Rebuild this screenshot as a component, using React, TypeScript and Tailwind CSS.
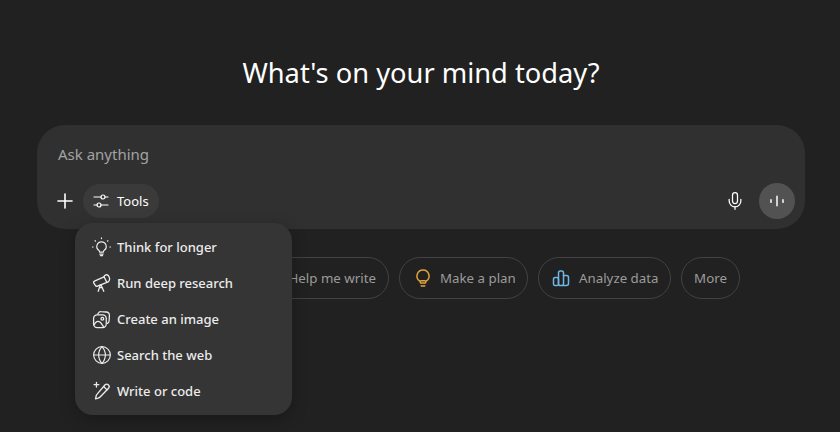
import type { ReactNode } from 'react';
import { Globe, Mic, Plus } from 'lucide-react';

const FONT = 'font-["Noto_Sans",sans-serif]';

function Telescope() {
    return (
        <svg width="20" height="20" viewBox="0 0 18 18" fill="none" stroke="currentColor" strokeWidth="1.2" strokeLinecap="round" strokeLinejoin="round">
            <path d="M2.200 7.400 10.800 3.400 13.400 8.400 5 11.800a1.600 1.600 0 0 1-2-.7L1.600 9.200a1.300 1.300 0 0 1 .6-1.800Z" />
            <path d="M10.800 3.400c.3-1.200 1.900-2.200 3.100-1.700 1.300.6 2.300 3.200 1.800 4.700-.4 1.200-1.300 1.900-2.300 2" />
            <path d="M7.500 10.700 5.600 16.400M8 10.500l2.600 5.900M6.800 13.200h2.600" />
        </svg>
    );
}

function ImageSpark() {
    return (
        <svg width="19" height="19" viewBox="0 0 18 18" fill="none" stroke="currentColor" strokeWidth="1.2" strokeLinecap="round" strokeLinejoin="round">
            <path d="M5.500 3.800 6 3c.5-1 1.400-1.500 2.400-1.400l5 .3c2 .1 3.200 1.300 3.100 3.300l-.3 5c-.1 1.100-.6 2-1.500 2.500" />
            <rect x="1.500" y="4.600" width="12" height="12" rx="3.400" />
            <circle cx="9.800" cy="8.300" r="1.300" />
            <path d="M2 14.200c1.500-3.200 3.600-4.200 5.500-2.800 1.400 1 2.400 3 3.700 4.900" />
        </svg>
    );
}

function PencilSpark() {
    return (
        <svg width="20" height="20" viewBox="0 0 18 18" fill="none" stroke="currentColor" strokeWidth="1.2" strokeLinecap="round" strokeLinejoin="round">
            <path d="M11.800 3.400a2.200 2.200 0 0 1 3.100 3.100L7.300 14.400c-.5.500-1.100.8-1.800 1l-2.300.6.500-2.400c.1-.7.400-1.300.9-1.800l7.200-8.400Z" />
            <path d="m10.500 5 3 3" />
            <path d="M4 1.200v4.200M1.900 3.300h4.200" />
        </svg>
    );
}

function BulbRays() {
    return (
        <svg width="22" height="22" viewBox="0 0 20 20" fill="none" stroke="currentColor" strokeWidth="1.150" strokeLinecap="round" strokeLinejoin="round">
            <path d="M10 5.200a4.400 4.400 0 0 0-2.600 8c.6.400.8 1 .8 1.600h3.600c0-.6.200-1.200.8-1.600a4.400 4.400 0 0 0-2.600-8Z" />
            <path d="M8.400 16.700h3.200M9 18.300h2" />
            <path d="M10 1.400v.6M3.900 4l.4.400M16.100 4l-.4.400M1.400 10H2M18 10h.6" />
        </svg>
    );
}

function PlanBulb() {
    return (
        <svg width="20" height="20" viewBox="0 0 20 20" fill="none" stroke="#e2a33d" strokeWidth="1.500" strokeLinecap="round" strokeLinejoin="round">
            <path d="M10 2a6 6 0 0 0-3.500 10.900c.7.500 1 1.200 1 2.100h5c0-.9.300-1.600 1-2.100A6 6 0 0 0 10 2Z" />
            <path d="M7.800 12.800h4.400M8.200 17.800c.5.300 3.100.3 3.600 0" />
        </svg>
    );
}

function BarsIcon() {
    return (
        <svg width="20" height="20" viewBox="0 0 20 20" fill="none" stroke="#6cb8e8" strokeWidth="1.500" strokeLinecap="round" strokeLinejoin="round">
            <rect x="2.500" y="9.500" width="5" height="8" rx="1.600" />
            <rect x="7.500" y="3" width="5" height="14.500" rx="1.800" />
            <path d="M12.500 7.500h3a2 2 0 0 1 2 2v6a2 2 0 0 1-2 2h-3" />
        </svg>
    );
}

function SlidersIcon() {
    return (
        <svg width="18" height="18" viewBox="0 0 18 18" fill="none" stroke="currentColor" strokeWidth="1.200" strokeLinecap="round">
            <path d="M2 5h7M13 5h3" />
            <circle cx="11" cy="5" r="2" />
            <path d="M2 13h3M9 13h7" />
            <circle cx="7" cy="13" r="2" />
        </svg>
    );
}

function VoiceIcon() {
    return (
        <svg width="18" height="18" viewBox="0 0 18 18" fill="none" stroke="#e0e0e0" strokeWidth="1.800" strokeLinecap="round">
            <path d="M3 7.800v2.400M9 4.500v9M15 7.800v2.400" />
        </svg>
    );
}

const MENU_ITEMS: { label: string; icon: ReactNode }[] = [
    { label: 'Think for longer', icon: <BulbRays /> },
    { label: 'Run deep research', icon: <Telescope /> },
    { label: 'Create an image', icon: <ImageSpark /> },
    { label: 'Search the web', icon: <Globe className="h-[20px] w-[20px]" strokeWidth={1.4} /> },
    { label: 'Write or code', icon: <PencilSpark /> },
];

function Chip({ label, icon, className }: { label: string; icon?: ReactNode; className: string }) {
    return (
        <div className={`flex h-[42px] items-center rounded-full border border-[#424242] text-[13.300px] text-[#9b9b9b] ${className}`}>
            {icon}
            <span className="pt-[2px]">{label}</span>
        </div>
    );
}

export default function App() {
    return (
        <main className={`${FONT} relative flex h-[432px] w-[840px] flex-col items-center overflow-hidden bg-[#212121] pl-[2px]`}>
            <h1 className="mt-[52px] h-[42px] text-[27.250px] leading-[42px] font-normal text-white">What's on your mind today?</h1>

            <section className="mt-[31px] flex h-[104px] w-[768px] flex-col rounded-[28px] bg-[#303030] pr-[10px] pl-[21px]">
                <div className="mt-[18px] h-[22px] text-[15px] leading-[22px] text-[#a3a3a3]">Ask anything</div>
                <div className="mt-[18px] flex h-[36px] items-center">
                    <Plus className="-ml-[5px] h-[24px] w-[24px] text-white" strokeWidth={1.6} />
                    <div className="ml-[6px] flex h-[34px] w-[76px] items-center gap-[7px] rounded-full bg-[#3a3a3a] pl-[9px] text-[13px] text-white">
                        <SlidersIcon />
                        <span className="pt-[2px]">Tools</span>
                    </div>
                    <Mic className="ml-auto h-[20px] w-[20px] text-white" strokeWidth={1.5} />
                    <div className="ml-[14px] flex h-[36px] w-[36px] items-center justify-center rounded-full bg-[#525252]">
                        <VoiceIcon />
                    </div>
                </div>
            </section>

            <nav className="mt-[28px] flex w-[768px] items-center gap-[10px] pl-[182px]">
                <Chip label="Help me write" className="w-[170px] justify-end pr-[12px]" />
                <Chip label="Make a plan" icon={<PlanBulb />} className="w-[129px] gap-[7px] pl-[13px]" />
                <Chip label="Analyze data" icon={<BarsIcon />} className="w-[133px] gap-[8px] pl-[12px]" />
                <Chip label="More" className="w-[59px] justify-center" />
            </nav>

            <div className="absolute top-[223px] left-[75px] flex h-[192px] w-[217px] flex-col justify-center rounded-[18px] bg-[#353535] pl-[16px] shadow-[0_4px_16px_rgba(0,0,0,0.25)]">
                {MENU_ITEMS.map((item) => (
                    <div key={item.label} className="flex h-[36px] items-center gap-[5px] text-[13px] font-medium text-[#ececec]">
                        <span className="flex w-[21px] items-center justify-center">{item.icon}</span>
                        <span className="pt-[2px]">{item.label}</span>
                    </div>
                ))}
            </div>
        </main>
    );
}
